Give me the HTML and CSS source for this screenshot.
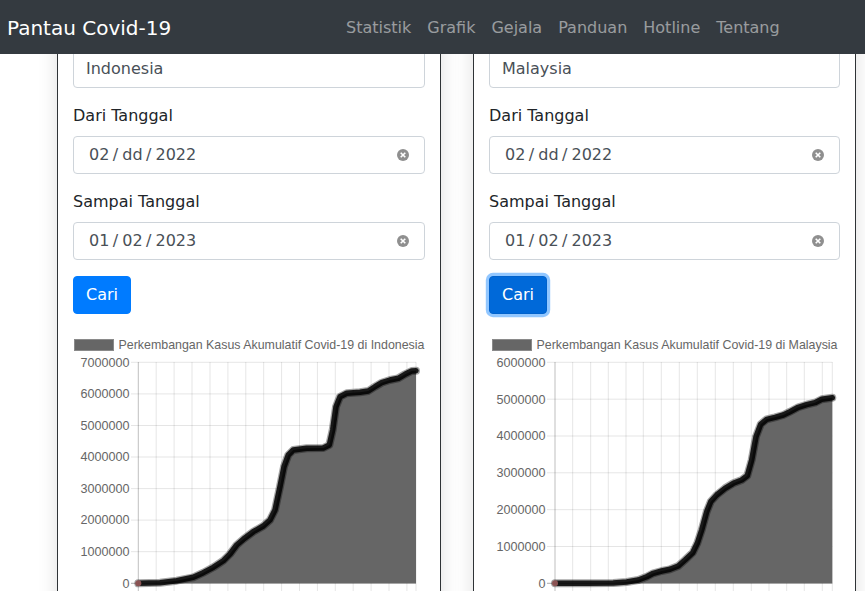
FILE: index.html
```html
<!DOCTYPE html>
<html lang="id">
<head>
<meta charset="utf-8">
<title>Pantau Covid-19</title>
<link rel="stylesheet" href="styles.css">
</head>
<body>
<nav class="navbar">
  <a class="brand" href="#">Pantau Covid-19</a>
  <ul class="nav">
    <li><a href="#">Statistik</a></li>
    <li><a href="#">Grafik</a></li>
    <li><a href="#">Gejala</a></li>
    <li><a href="#">Panduan</a></li>
    <li><a href="#">Hotline</a></li>
    <li><a href="#">Tentang</a></li>
  </ul>
</nav>

<main class="cards">
  <section class="card card-left">
    <div class="form-group">
      <div class="input">Indonesia</div>
    </div>
    <div class="form-group">
      <label class="label">Dari Tanggal</label>
      <div class="input date"><span class="dtext"><span>02</span><span class="sep">/</span><span>dd</span><span class="sep">/</span><span>2022</span></span>
        <svg class="clear" width="12" height="12" viewBox="-6 -6 12 12"><circle r="6" fill="#8f8f8f"/><path d="M-2.3,-2.3 L2.3,2.3 M2.3,-2.3 L-2.3,2.3" stroke="#fff" stroke-width="1.6"/></svg></div>
    </div>
    <div class="form-group">
      <label class="label">Sampai Tanggal</label>
      <div class="input date"><span class="dtext"><span>01</span><span class="sep">/</span><span>02</span><span class="sep">/</span><span>2023</span></span>
        <svg class="clear" width="12" height="12" viewBox="-6 -6 12 12"><circle r="6" fill="#8f8f8f"/><path d="M-2.3,-2.3 L2.3,2.3 M2.3,-2.3 L-2.3,2.3" stroke="#fff" stroke-width="1.6"/></svg></div>
    </div>
    <button class="btn">Cari</button>

    <div class="chart">
      <div class="legend"><span class="legend-box"></span><span class="legend-text">Perkembangan Kasus Akumulatif Covid-19 di Indonesia</span></div>
      <svg class="plot" width="352" height="240" viewBox="73 351 352 240">
        <g stroke="rgba(0,0,0,0.1)" stroke-width="1">
          <path d="M131,583.3H416 M131,551.7H416 M131,520.1H416 M131,488.6H416 M131,457H416 M131,425.5H416 M131,393.9H416 M131,362.3H416"/>
          <path d="M156.2,362V591 M174.1,362V591 M192,362V591 M210,362V591 M227.9,362V591 M245.8,362V591 M263.7,362V591 M281.6,362V591 M299.5,362V591 M317.4,362V591 M335.3,362V591 M353.2,362V591 M371.1,362V591 M389,362V591 M406.9,362V591 M416,362V591"/>
        </g>
        <path d="M138.3,362V591 M131,583.3H416" stroke="rgba(0,0,0,0.25)" stroke-width="1"/>
        <g class="ticks" text-anchor="end">
          <text x="129.5" y="587.6">0</text>
          <text x="129.5" y="556">1000000</text>
          <text x="129.5" y="524.4">2000000</text>
          <text x="129.5" y="492.9">3000000</text>
          <text x="129.5" y="461.3">4000000</text>
          <text x="129.5" y="429.8">5000000</text>
          <text x="129.5" y="398.2">6000000</text>
          <text x="129.5" y="366.6">7000000</text>
        </g>
        <path fill="#666" d="M138.3,583.3 L160,582.7 L176.7,580.7 L193.3,577.3 L203.3,572.7 L213.3,567.3 L223.3,560.7 L230,554 L236.7,545 L243.3,539.3 L253.3,531.7 L263.3,526 L270,520 L275,510 L280,486.7 L284,466.7 L288.3,455 L293.3,450 L306.7,448.3 L323.3,448 L329.3,445 L332.7,430 L336,406.7 L340,396.7 L346.7,393.3 L360,392.3 L368.3,391 L375,386.7 L381.7,382.7 L390,380 L398.3,378.3 L405,374.3 L411.7,371 L416,370.7 L416,583.3 Z"/>
        <path class="line-glow" d="M138.3,583.3 L160,582.7 L176.7,580.7 L193.3,577.3 L203.3,572.7 L213.3,567.3 L223.3,560.7 L230,554 L236.7,545 L243.3,539.3 L253.3,531.7 L263.3,526 L270,520 L275,510 L280,486.7 L284,466.7 L288.3,455 L293.3,450 L306.7,448.3 L323.3,448 L329.3,445 L332.7,430 L336,406.7 L340,396.7 L346.7,393.3 L360,392.3 L368.3,391 L375,386.7 L381.7,382.7 L390,380 L398.3,378.3 L405,374.3 L411.7,371 L416,370.7"/>
        <path class="line" d="M138.3,583.3 L160,582.7 L176.7,580.7 L193.3,577.3 L203.3,572.7 L213.3,567.3 L223.3,560.7 L230,554 L236.7,545 L243.3,539.3 L253.3,531.7 L263.3,526 L270,520 L275,510 L280,486.7 L284,466.7 L288.3,455 L293.3,450 L306.7,448.3 L323.3,448 L329.3,445 L332.7,430 L336,406.7 L340,396.7 L346.7,393.3 L360,392.3 L368.3,391 L375,386.7 L381.7,382.7 L390,380 L398.3,378.3 L405,374.3 L411.7,371 L416,370.7"/>
        <circle cx="138.3" cy="583.3" r="3" fill="rgba(190,110,110,0.7)"/>
      </svg>
    </div>
  </section>

  <section class="card card-right">
    <div class="form-group">
      <div class="input">Malaysia</div>
    </div>
    <div class="form-group">
      <label class="label">Dari Tanggal</label>
      <div class="input date"><span class="dtext"><span>02</span><span class="sep">/</span><span>dd</span><span class="sep">/</span><span>2022</span></span>
        <svg class="clear" width="12" height="12" viewBox="-6 -6 12 12"><circle r="6" fill="#8f8f8f"/><path d="M-2.3,-2.3 L2.3,2.3 M2.3,-2.3 L-2.3,2.3" stroke="#fff" stroke-width="1.6"/></svg></div>
    </div>
    <div class="form-group">
      <label class="label">Sampai Tanggal</label>
      <div class="input date"><span class="dtext"><span>01</span><span class="sep">/</span><span>02</span><span class="sep">/</span><span>2023</span></span>
        <svg class="clear" width="12" height="12" viewBox="-6 -6 12 12"><circle r="6" fill="#8f8f8f"/><path d="M-2.3,-2.3 L2.3,2.3 M2.3,-2.3 L-2.3,2.3" stroke="#fff" stroke-width="1.6"/></svg></div>
    </div>
    <button class="btn btn-focus">Cari</button>

    <div class="chart">
      <div class="legend"><span class="legend-box"></span><span class="legend-text">Perkembangan Kasus Akumulatif Covid-19 di Malaysia</span></div>
      <svg class="plot" width="351" height="240" viewBox="489 351 351 240">
        <g stroke="rgba(0,0,0,0.1)" stroke-width="1">
          <path d="M547,583.3H832.3 M547,546.5H832.3 M547,509.7H832.3 M547,472.8H832.3 M547,436H832.3 M547,399.2H832.3 M547,362.3H832.3"/>
          <path d="M572.7,362V591 M590.7,362V591 M608.3,362V591 M626,362V591 M643.3,362V591 M661.3,362V591 M679.3,362V591 M697.3,362V591 M715.3,362V591 M733.3,362V591 M751.3,362V591 M769,362V591 M786.7,362V591 M804.3,362V591 M822.3,362V591 M832.3,362V591"/>
        </g>
        <path d="M555,362V591 M547,583.3H832.3" stroke="rgba(0,0,0,0.25)" stroke-width="1"/>
        <g class="ticks" text-anchor="end">
          <text x="545.5" y="587.6">0</text>
          <text x="545.5" y="550.8">1000000</text>
          <text x="545.5" y="514">2000000</text>
          <text x="545.5" y="477.1">3000000</text>
          <text x="545.5" y="440.3">4000000</text>
          <text x="545.5" y="403.5">5000000</text>
          <text x="545.5" y="366.6">6000000</text>
        </g>
        <path fill="#666" d="M555,583.3 L586.7,583.3 L613.3,583 L626.7,582 L638.3,580 L646.7,576.7 L653.3,573.3 L661.7,571 L670,569.3 L678.3,566 L685,560 L692.7,552.7 L697.3,543.3 L701.7,530 L706.7,511.7 L710.7,501.7 L716.7,495 L725,488.3 L733.3,483.3 L741.7,480 L747.3,475.7 L751.7,460 L756,436.7 L760.7,424.3 L766.7,419.3 L775,417.3 L783.3,415 L790,411.7 L798.3,407.3 L806.7,404.7 L815,402.7 L821.7,399.3 L832.3,397.7 L832.3,583.3 Z"/>
        <path class="line-glow" d="M555,583.3 L586.7,583.3 L613.3,583 L626.7,582 L638.3,580 L646.7,576.7 L653.3,573.3 L661.7,571 L670,569.3 L678.3,566 L685,560 L692.7,552.7 L697.3,543.3 L701.7,530 L706.7,511.7 L710.7,501.7 L716.7,495 L725,488.3 L733.3,483.3 L741.7,480 L747.3,475.7 L751.7,460 L756,436.7 L760.7,424.3 L766.7,419.3 L775,417.3 L783.3,415 L790,411.7 L798.3,407.3 L806.7,404.7 L815,402.7 L821.7,399.3 L832.3,397.7"/>
        <path class="line" d="M555,583.3 L586.7,583.3 L613.3,583 L626.7,582 L638.3,580 L646.7,576.7 L653.3,573.3 L661.7,571 L670,569.3 L678.3,566 L685,560 L692.7,552.7 L697.3,543.3 L701.7,530 L706.7,511.7 L710.7,501.7 L716.7,495 L725,488.3 L733.3,483.3 L741.7,480 L747.3,475.7 L751.7,460 L756,436.7 L760.7,424.3 L766.7,419.3 L775,417.3 L783.3,415 L790,411.7 L798.3,407.3 L806.7,404.7 L815,402.7 L821.7,399.3 L832.3,397.7"/>
        <circle cx="555" cy="583.3" r="3" fill="rgba(190,110,110,0.7)"/>
      </svg>
    </div>
  </section>
</main>
</body>
</html>
```

FILE: styles.css
```css
* { box-sizing: border-box; }

html, body {
  margin: 0;
  padding: 0;
  background: #fff;
  font-family: "DejaVu Sans", sans-serif;
  font-size: 16px;
  color: #212529;
  overflow: hidden;
}

.navbar {
  position: fixed;
  top: 0;
  left: 0;
  right: 0;
  height: 54px;
  background: #343a40;
  display: flex;
  align-items: center;
  padding: 2px 0 0 7px;
  z-index: 10;
}

.brand {
  width: 331px;
  color: #fff;
  text-decoration: none;
  font-size: 20px;
  line-height: 30px;
}

.nav {
  display: flex;
  list-style: none;
  margin: 0;
  padding: 0;
}

.nav a {
  display: block;
  padding: 8px 8px;
  color: rgba(255, 255, 255, 0.5);
  text-decoration: none;
  line-height: 24px;
}

.cards {
  display: flex;
  align-items: flex-start;
  gap: 32px;
  padding-left: 57px;
}

.card {
  border: 1px solid #2f3336;
  padding: 49px 15px 40px;
  background: #fff;
  box-shadow: 0 0 18px rgba(0, 0, 0, 0.13);
  height: 640px;
}

.card-left { width: 384px; }
.card-right { width: 383px; }

.form-group { margin-bottom: 16px; }

.label {
  display: block;
  margin-bottom: 8px;
  line-height: 24px;
  color: #212529;
}

.input {
  height: 38px;
  border: 1px solid #ced4da;
  border-radius: 4px;
  padding: 6px 12px;
  line-height: 24px;
  color: #495057;
  background: #fff;
}

.date {
  display: flex;
  align-items: center;
  justify-content: space-between;
  padding: 6px 15px 6px 15px;
}

.dtext { display: flex; }
.sep { margin: 0 4px 0 3.5px; }

.clear { display: block; }

.btn {
  display: block;
  height: 38px;
  padding: 6px 12px;
  font-family: "DejaVu Sans", sans-serif;
  font-size: 16px;
  line-height: 24px;
  color: #fff;
  background: #007bff;
  border: 1px solid #007bff;
  border-radius: 4px;
}

.btn-focus {
  background: #0069d9;
  border-color: #0062cc;
  box-shadow: 0 0 0 3.2px rgba(38, 143, 255, 0.5);
}

.chart { margin-top: 25px; }

.legend {
  display: flex;
  justify-content: center;
  align-items: center;
  height: 12px;
  gap: 5px;
  font-family: "Liberation Sans", Arial, sans-serif;
  font-size: 12.4px;
  color: #666;
}

.legend-box {
  flex: none;
  width: 40px;
  height: 12px;
  background: #666;
  border: 1px solid #8a8a8a;
}

.legend-text { line-height: 12px; white-space: nowrap; }

.plot { display: block; }

.ticks {
  font-family: "Liberation Sans", Arial, sans-serif;
  font-size: 12.6px;
  fill: #666;
}

.line-glow {
  fill: none;
  stroke: rgba(0, 0, 0, 0.35);
  stroke-width: 8;
  stroke-linejoin: round;
  stroke-linecap: round;
}

.line {
  fill: none;
  stroke: rgba(0, 0, 0, 0.85);
  stroke-width: 5.5;
  stroke-linejoin: round;
  stroke-linecap: round;
}
```
